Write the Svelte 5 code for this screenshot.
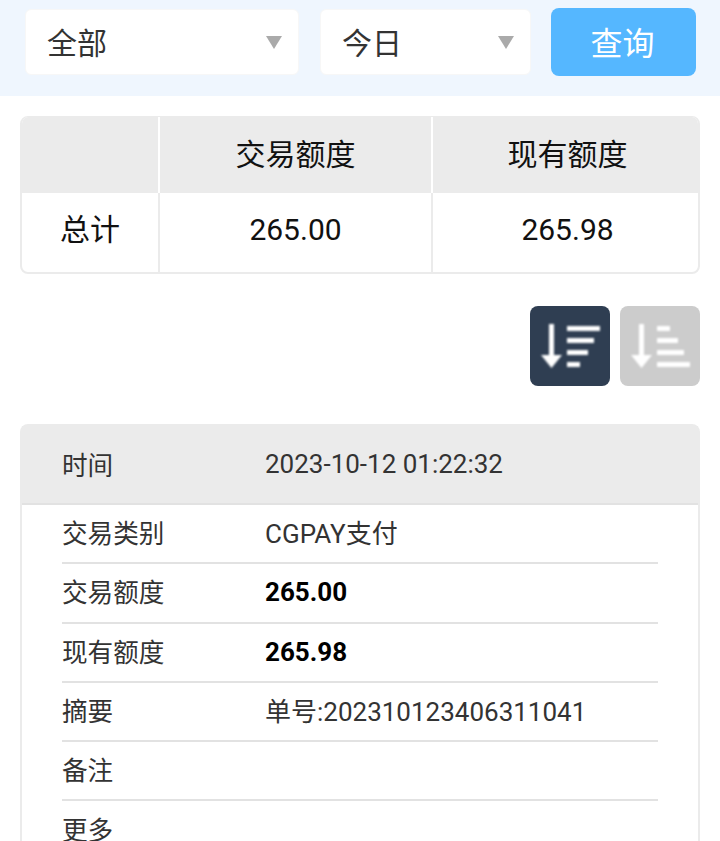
<script>
  const totals = { trade: '265.00', balance: '265.98' };
  const rows = [
    { label: '交易类别', value: 'CGPAY支付' },
    { label: '交易额度', value: '265.00', bold: true },
    { label: '现有额度', value: '265.98', bold: true },
    { label: '摘要', value: '单号:202310123406311041' },
    { label: '备注', value: '' },
    { label: '更多', value: '' }
  ];
</script>

<div class="page">
  <form class="filter" onsubmit={(e) => e.preventDefault()}>
    <div class="select select-type"><span>全部</span><i class="caret"></i></div>
    <div class="select select-date"><span>今日</span><i class="caret"></i></div>
    <button class="query" type="submit">查询</button>
  </form>

  <div class="summary">
    <div class="cell head"></div>
    <div class="cell head cjk">交易额度</div>
    <div class="cell head cjk">现有额度</div>
    <div class="cell total">总计</div>
    <div class="cell">{totals.trade}</div>
    <div class="cell">{totals.balance}</div>
  </div>

  <div class="sort">
    <button class="sort-btn active" aria-label="降序">
      <svg width="80" height="80" viewBox="0 0 80 80">
        <path d="M19 18h5v31h8L21.500 62 11 49h8z" fill="#fff" />
        <rect x="37" y="20" width="33" height="5" fill="#fff" />
        <rect x="37" y="32" width="27" height="5" fill="#fff" />
        <rect x="37" y="44" width="21" height="5" fill="#fff" />
        <rect x="37" y="56" width="13" height="5" fill="#fff" />
      </svg>
    </button>
    <button class="sort-btn" aria-label="升序">
      <svg width="80" height="80" viewBox="0 0 80 80">
        <path d="M19 18h5v31h8L21.500 62 11 49h8z" fill="#fff" />
        <rect x="37" y="20" width="13" height="5" fill="#fff" />
        <rect x="37" y="32" width="21" height="5" fill="#fff" />
        <rect x="37" y="44" width="27" height="5" fill="#fff" />
        <rect x="37" y="56" width="33" height="5" fill="#fff" />
      </svg>
    </button>
  </div>

  <div class="record">
    <div class="record-head">
      <span class="label">时间</span>
      <span class="value time">2023-10-12 01:22:32</span>
    </div>
    {#each rows as row}
      <div class="row">
        <span class="label">{row.label}</span>
        <span class="value" class:bold={row.bold}>{row.value}</span>
      </div>
    {/each}
  </div>
</div>

<style>
  :global(body) {
    margin: 0;
    background: #fff;
  }

  .page {
    width: 720px;
    height: 841px;
    overflow: hidden;
    font-family: Roboto, "Noto Sans CJK SC", sans-serif;
    color: #222;
  }

  .filter {
    display: flex;
    align-items: flex-start;
    height: 96px;
    box-sizing: border-box;
    padding: 8px 24px 0 25px;
    background: #eff6fe;
  }

  .select {
    display: flex;
    align-items: center;
    justify-content: space-between;
    box-sizing: border-box;
    height: 66px;
    margin-top: 1px;
    padding: 0 16px 2px 21px;
    background: #fff;
    border: 1px solid #f7f7f7;
    border-radius: 6px;
    font-size: 30px;
    color: #333;
  }
  .select-type {
    width: 274px;
    margin-right: 21px;
  }
  .select-date {
    width: 211px;
    margin-right: 20px;
  }

  .caret {
    width: 0;
    height: 0;
    margin-top: 2px;
    border-left: 8px solid transparent;
    border-right: 8px solid transparent;
    border-top: 13px solid #aaa;
  }

  .query {
    width: 145px;
    height: 68px;
    padding: 0 2px 3px 0;
    border: 0;
    border-radius: 8px;
    background: #55b7ff;
    color: #fff;
    font: inherit;
    font-size: 32px;
  }

  .summary {
    display: grid;
    grid-template-columns: 138px 273px 1fr;
    grid-template-rows: 76px 79px;
    margin: 20px 20px 0;
    border: 2px solid #ebebeb;
    border-top-width: 1px;
    border-radius: 8px;
    overflow: hidden;
  }

  .cell {
    display: flex;
    align-items: center;
    justify-content: center;
    padding-bottom: 6px;
    font-size: 30px;
    color: #111;
  }
  .cell:nth-child(3n) {
    padding-left: 4px;
  }
  .cell:not(:nth-child(3n)) {
    border-right: 2px solid #ebebeb;
  }
  .cell.total {
    padding-bottom: 11px;
  }
  .head {
    background: #ebebeb;
  }
  .cell.head:not(:nth-child(3n)) {
    border-right-color: #fff;
  }

  .sort {
    display: flex;
    justify-content: flex-end;
    gap: 10px;
    margin: 32px 20px 38px;
  }

  .sort-btn {
    width: 80px;
    height: 80px;
    padding: 0;
    border: 0;
    border-radius: 8px;
    background: #ccc;
  }
  .sort-btn.active {
    background: #2f3e52;
  }
  .sort-btn svg {
    display: block;
    filter: blur(1px);
  }

  .record {
    margin: 0 20px;
    border: 2px solid #ebebeb;
    border-bottom: 0;
    border-radius: 8px 8px 0 0;
  }

  .record-head {
    display: flex;
    align-items: center;
    height: 79px;
    padding: 0 40px 3px;
    box-sizing: border-box;
    background: #ebebeb;
    border-bottom: 2px solid #e2e2e2;
  }

  .row {
    display: flex;
    align-items: center;
    box-sizing: border-box;
    height: 59.300px;
    padding-bottom: 4px;
    margin: 0 40px;
    border-bottom: 2px solid #e2e2e2;
  }

  .label {
    flex: 0 0 203px;
    font-size: 25.600px;
    color: #333;
  }

  .value {
    font-size: 26px;
    color: #333;
  }
  .value.time {
    margin-top: 1px;
  }
  .value.bold {
    margin-top: 3px;
    font-weight: 700;
    color: #000;
  }
</style>
